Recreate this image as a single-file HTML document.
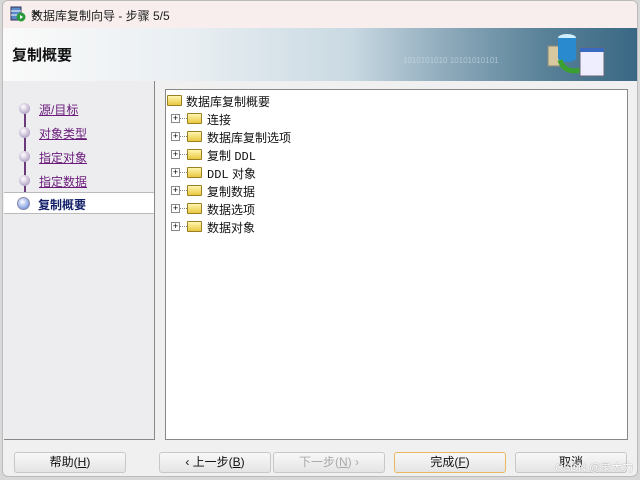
<!DOCTYPE html>
<html><head><meta charset="utf-8"><style>
*{margin:0;padding:0;box-sizing:border-box}
body{width:640px;height:480px;background:#d8d8d8;font-family:"Liberation Sans","Noto Sans CJK SC",sans-serif;font-size:12px;position:relative;overflow:hidden}
.win{position:absolute;left:2px;top:0;width:636px;height:477px;background:#f0f0f0;border:1px solid #bbb;border-radius:6px;overflow:hidden}
.title{position:absolute;left:0;top:0;width:100%;height:27px;background:#f8eeee}
.title span{position:absolute;left:28px;top:6px;font-size:12px;color:#222}
.close{position:absolute;right:12px;top:3px;font-size:16px;color:#333}
.hdr{position:absolute;left:0;top:27px;width:100%;height:53px;background:linear-gradient(90deg,#fafafa 0%,#e8eef2 30%,#c9d9e2 55%,#8eaabb 70%,#5a8299 85%,#3a6884 100%)}
.hdr b{position:absolute;left:9px;top:16px;font-size:15px;color:#111;font-weight:bold}
.left{position:absolute;left:1px;top:80px;width:151px;height:359px;background:#ededf0;border-right:1px solid #888;border-bottom:1px solid #888}
.right{position:absolute;left:162px;top:88px;width:463px;height:351px;background:#fff;border:1px solid #888}
.step{position:absolute;left:35px;font-size:12px;color:#6a1a7a;text-decoration:underline}
.sel{position:absolute;left:0;top:111px;width:150px;height:22px;background:#fff;border-top:1px solid #bbb;border-bottom:1px solid #bbb}
.sel span{position:absolute;left:34px;top:3px;color:#13206a;font-weight:bold;font-size:12px}
.vl{position:absolute;left:20px;top:24px;width:2px;height:90px;background:#6a3a7a}
.dot{position:absolute;left:15px;width:11px;height:11px;border-radius:50%;background:radial-gradient(circle at 40% 35%,#fff,#b8a8c8 70%)}
.row{position:absolute;left:5px;height:18px;font-size:12px;color:#111;white-space:nowrap}
.pb{position:absolute;left:0;top:4px;width:9px;height:9px;border:1px solid #888;background:#fff;font-size:9px;line-height:7px;text-align:center;color:#000}
.dl{position:absolute;left:9px;top:8px;width:7px;border-top:1px dotted #888}
.fd{position:absolute;left:16px;top:3px;width:15px;height:11px;background:linear-gradient(#fff6b0,#e8c840);border:1px solid #9a8020;border-radius:1px}
.row .t{position:absolute;left:36px;top:1px}
.btn{position:absolute;top:451px;width:112px;height:21px;border:1px solid #c8c8c8;border-radius:3px;background:linear-gradient(#f8f8f8,#e4e4e4);text-align:center;line-height:19px;font-size:12px;color:#111}
</style></head><body>
<div class="win">
<div class="title">
<svg style="position:absolute;left:7px;top:5px" width="16" height="16"><rect x="1" y="1" width="10" height="13" fill="#5a8ac8" stroke="#335"/><line x1="1" y1="5" x2="11" y2="5" stroke="#fff"/><line x1="1" y1="9" x2="11" y2="9" stroke="#fff"/><circle cx="11" cy="11" r="4.5" fill="#2a9a3a"/><path d="M10 9 L13 11 L10 13Z" fill="#fff"/></svg>
<span>数据库复制向导 - 步骤 5/5</span><span class="close">✕</span></div>
<div class="hdr"><b>复制概要</b>
<div style="position:absolute;left:400px;top:28px;font-size:8px;color:#cfe0ea;opacity:.6">1010101010 10101010101</div>
<svg style="position:absolute;left:535px;top:2px" width="70" height="50"><rect x="10" y="16" width="14" height="20" fill="#d8c8a0" stroke="#887"/><ellipse cx="29" cy="8" rx="9" ry="4" fill="#cfefff"/><rect x="20" y="8" width="18" height="20" fill="#2a8ad0"/><ellipse cx="29" cy="28" rx="9" ry="4" fill="#2a8ad0"/><path d="M22 30 Q26 44 44 40" stroke="#3aa030" stroke-width="5" fill="none"/><rect x="42" y="18" width="24" height="28" fill="#eef" stroke="#667"/><rect x="42" y="18" width="24" height="4" fill="#3a6ac0"/></svg>
</div>
<div class="left">
<div class="vl"></div>
<div class="dot" style="top:22px"></div><span class="step" style="top:20px">源/目标</span>
<div class="dot" style="top:46px"></div><span class="step" style="top:44px">对象类型</span>
<div class="dot" style="top:70px"></div><span class="step" style="top:68px">指定对象</span>
<div class="dot" style="top:94px"></div><span class="step" style="top:92px">指定数据</span>
<div class="sel"><span>复制概要</span><div class="dot" style="top:4px;left:13px;width:13px;height:13px;background:radial-gradient(circle at 40% 35%,#fff,#7a9ae0 75%);border:1px solid #88a"></div></div>
</div>
<div class="right">
<div class="row" style="left:1px;top:2px"><div class="fd" style="left:0"></div><span class="t" style="left:19px">数据库复制概要</span></div>
<div class="row" style="top:20px"><div class="pb">+</div><div class="dl"></div><div class="fd"></div><span class="t">连接</span></div>
<div class="row" style="top:38px"><div class="pb">+</div><div class="dl"></div><div class="fd"></div><span class="t">数据库复制选项</span></div>
<div class="row" style="top:56px"><div class="pb">+</div><div class="dl"></div><div class="fd"></div><span class="t">复制 <span style="font-family:'Liberation Mono',monospace">DDL</span></span></div>
<div class="row" style="top:74px"><div class="pb">+</div><div class="dl"></div><div class="fd"></div><span class="t"><span style="font-family:'Liberation Mono',monospace">DDL</span> 对象</span></div>
<div class="row" style="top:92px"><div class="pb">+</div><div class="dl"></div><div class="fd"></div><span class="t">复制数据</span></div>
<div class="row" style="top:110px"><div class="pb">+</div><div class="dl"></div><div class="fd"></div><span class="t">数据选项</span></div>
<div class="row" style="top:128px"><div class="pb">+</div><div class="dl"></div><div class="fd"></div><span class="t">数据对象</span></div>
</div>
<div class="btn" style="left:11px">帮助(<u>H</u>)</div>
<div class="btn" style="left:156px">‹ 上一步(<u>B</u>)</div>
<div class="btn" style="left:270px;color:#aaa">下一步(<u>N</u>) ›</div>
<div class="btn" style="left:391px;border-color:#e8b860">完成(<u>F</u>)</div>
<div class="btn" style="left:512px">取消</div>
<span style="position:absolute;left:552px;top:458px;font-size:11px;color:#fff;text-shadow:0 0 1px #777">CSDN @录大力</span>
</div>
</body></html>
